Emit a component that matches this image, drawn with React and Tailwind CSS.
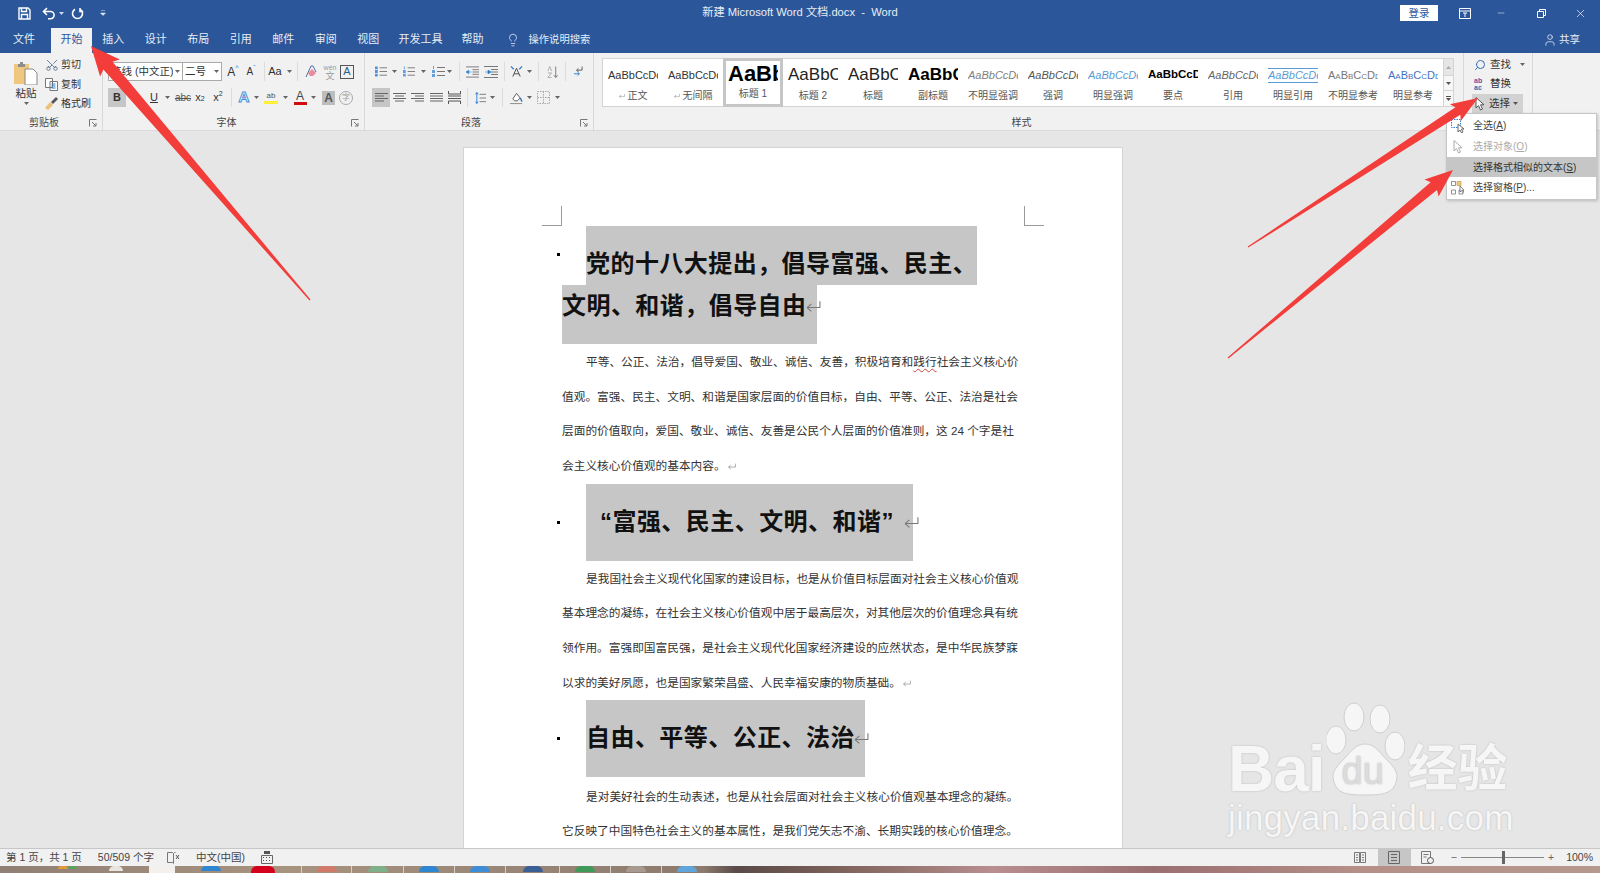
import React from "react";
import { Lightbulb, Scissors, Search, User, X, Minus } from "lucide-react";

const TABS = [
    ["文件", "w-[48px] ml-0"],
    ["开始", "w-[41px] ml-[3px] bg-[#f1f1f1] text-[#2b579a]"],
    ["插入", "w-[42.5px]"],
    ["设计", "w-[42.5px]"],
    ["布局", "w-[42.5px]"],
    ["引用", "w-[42.5px]"],
    ["邮件", "w-[42.5px]"],
    ["审阅", "w-[42.5px]"],
    ["视图", "w-[42.5px]"],
    ["开发工具", "w-[62px]"],
    ["帮助", "w-[42px]"],
];

const STYLES = [
    ["AaBbCcDd", "正文", "text-[11px] text-[#333]", true],
    ["AaBbCcDd", "无间隔", "text-[11px] text-[#333]", true],
    ["AaBb", "标题 1", "text-[22px] font-bold text-black", false, true],
    ["AaBbC", "标题 2", "text-[17px] text-[#222]"],
    ["AaBbC", "标题", "text-[17px] text-[#222]"],
    ["AaBbC", "副标题", "text-[17px] font-bold text-black"],
    ["AaBbCcDd", "不明显强调", "text-[11px] italic text-[#808080]"],
    ["AaBbCcDd", "强调", "text-[11px] italic text-[#555]"],
    ["AaBbCcDd", "明显强调", "text-[11px] italic text-[#5b9bd5]"],
    ["AaBbCcDd", "要点", "text-[11.5px] font-bold text-black"],
    ["AaBbCcDd", "引用", "text-[11px] italic text-[#666]"],
    ["AaBbCcDd", "明显引用", "text-[11px] italic text-[#5b9bd5] border-y border-[#5b9bd5] leading-[13px]"],
    ["AaBbCcDd", "不明显参考", "text-[11px] [font-variant:small-caps] text-[#777]"],
    ["AaBbCcDd", "明显参考", "text-[11px] [font-variant:small-caps] text-[#4472c4]"],
];

function Dd({ className = "w-[8px]" }) {
    return (
        <div className={`flex justify-center ${className}`}>
            <svg width="5" height="3" viewBox="0 0 5 3">
                <path d="M0 0h5L2.5 3z" fill="#666" />
            </svg>
        </div>
    );
}

function Slot({ className, children }) {
    return <div className={`flex items-center justify-center h-[19px] shrink-0 ${className}`}>{children}</div>;
}

function Sep({ className }) {
    return <div className={`w-px h-[19px] bg-[#dcdcdc] shrink-0 ${className}`}></div>;
}

function Launcher() {
    return (
        <svg className="absolute right-[5px] bottom-[3px]" width="8" height="8" viewBox="0 0 8 8" fill="none" stroke="#777">
            <path d="M.5 7.5v-7h7M3 3l4 4M7 4v3H4" />
        </svg>
    );
}

function Group({ className, label, launcher, labelClass = "", children }) {
    return (
        <div className={`relative flex flex-col h-full shrink-0 ${className}`}>
            <div className="flex-1">{children}</div>
            <div className={`h-[16px] text-center text-[10px] leading-[17px] text-[#444] ${labelClass}`}>{label}</div>
            {launcher && <Launcher />}
        </div>
    );
}

function Lines({ dots, nums }) {
    return (
        <svg width="13" height="13" viewBox="0 0 13 13">
            <path d="M5 2.5h8M5 6.5h8M5 10.5h8" stroke="#777" />
            {dots && <path d="M0 1h3v3H0zM0 5h3v3H0zM0 9h3v3H0z" fill="#2b7cd3" opacity=".8" />}
            {nums && <path d="M1 1h1v3H1zM0 5h3v3H0zM0 9h3v3H0z" fill="#2b7cd3" opacity=".7" />}
        </svg>
    );
}

function AlignIcon({ d }) {
    return (
        <svg width="13" height="11" viewBox="0 0 13 11" fill="none" stroke="#666">
            <path d={d} />
        </svg>
    );
}

function Indent({ flip }) {
    return (
        <svg width="14" height="12" viewBox="0 0 14 12">
            <path d="M0 .5h14M7 3.5h7M7 6h7M7 8.5h7M0 11.5h14" stroke="#777" fill="none" />
            <path d={flip ? "M1 6h3V4l3 2-3 2V6" : "M6 6H3V4L0 6l3 2V6"} fill="#2b7cd3" stroke="#2b7cd3" strokeWidth=".6" />
        </svg>
    );
}

function Return({ className = "", w = 14, h = 12 }) {
    return (
        <svg className={`inline-block shrink-0 ${className}`} width={w} height={h} viewBox="0 0 14 12" fill="none" stroke="#777">
            <path d="M13 1v6H1M1 7l4-3.5M1 7l4 3.5" />
        </svg>
    );
}

function Cursor({ color = "#555", fill = "#fff", size = 11 }) {
    return (
        <svg width={size} height={size + 3} viewBox="0 0 11 14">
            <path d="M1 .5v10.5l2.5-2.4 2 4.4 2-1-2-4.2H9z" fill={fill} stroke={color} />
        </svg>
    );
}

function Arrow({ from, to, len, head, shaft }) {
    const dx = to[0] - from[0];
    const dy = to[1] - from[1];
    const l = Math.hypot(dx, dy);
    const ux = dx / l;
    const uy = dy / l;
    const pt = (along, side) => {
        const x = to[0] - ux * along - uy * side;
        const y = to[1] - uy * along + ux * side;
        return `${x.toFixed(1)},${y.toFixed(1)}`;
    };
    const points = [
        pt(0, 0),
        pt(len + 3, head / 2),
        pt(len, shaft / 2),
        pt(l, 0.6),
        pt(l, -0.6),
        pt(len, -shaft / 2),
        pt(len + 3, -head / 2),
    ].join(" ");
    return <polygon points={points} fill="#f33d3a" />;
}

function TitleBar() {
    return (
        <div className="flex items-center h-[26px] text-white">
            <div className="flex flex-1 items-center">
                <svg className="ml-[18px]" width="13" height="13" viewBox="0 0 13 13" fill="none" stroke="#fff" strokeWidth="1.4">
                    <path d="M1 1h9l2 2v9H1zM3.5 1v3.5h5V1M3.5 12V7.5h6V12" />
                </svg>
                <svg className="ml-[11px]" width="15" height="13" viewBox="0 0 15 13" fill="none" stroke="#fff" strokeWidth="1.6">
                    <path d="M5 1L1.5 4.5 5 8M2 4.5h6.5a3.6 3.6 0 010 7.2H6" />
                </svg>
                <svg className="ml-[2px]" width="5" height="3" viewBox="0 0 5 3">
                    <path d="M0 0h5L2.5 3z" fill="#cfd9ea" />
                </svg>
                <svg className="ml-[7px]" width="13" height="13" viewBox="0 0 13 13" fill="none" stroke="#fff" strokeWidth="1.6">
                    <path d="M4 2.2a5 5 0 105 0M9 1v3.5h3.2" />
                </svg>
                <svg className="ml-[16px]" width="6" height="6" viewBox="0 0 6 6">
                    <path d="M1 .5h4M.5 3h5L3 5.5z" fill="#dfe6f1" stroke="#dfe6f1" strokeWidth=".5" />
                </svg>
            </div>
            <div className="text-[11.2px] text-[#e8edf5] whitespace-pre pb-px">新建 Microsoft Word 文档.docx  -  Word</div>
            <div className="flex flex-1 items-center justify-end">
                <div className="w-[38px] h-[16px] bg-white text-[#2b579a] text-[10.5px] leading-[16px] text-center">登录</div>
                <svg className="ml-[21px]" width="12" height="11" viewBox="0 0 12 11" fill="none" stroke="#fff">
                    <path d="M.5.5h11v10H.5zM.5 3h11M6 5v4M4 5h4" />
                </svg>
                <Minus className="ml-[25px] mr-[2px]" size={10} strokeWidth={1.2} />
                <svg className="ml-[29px]" width="9" height="9" viewBox="0 0 9 9" fill="none" stroke="#fff">
                    <path d="M.5 2.5h6v6h-6zM2.5 2.5v-2h6v6h-2" />
                </svg>
                <X className="ml-[28px] mr-[13px]" size={13} strokeWidth={1.2} />
            </div>
        </div>
    );
}

function TabBar() {
    return (
        <div className="flex items-end h-[27px] text-[11px] text-[#e8edf5]">
            {TABS.map(([name, cls]) => (
                <div key={name} className={`h-[25px] leading-[23px] text-center shrink-0 ${cls}`}>
                    {name}
                </div>
            ))}
            <div className="flex items-center h-[25px] ml-[12px] pb-[2px]">
                <Lightbulb size={14} strokeWidth={1.3} />
                <span className="ml-[9px] text-[10.3px]">操作说明搜索</span>
            </div>
            <div className="flex items-center h-[25px] ml-auto mr-[20px] pb-[2px]">
                <User size={14} strokeWidth={1.3} />
                <span className="ml-[2px] text-[10.5px]">共享</span>
            </div>
        </div>
    );
}

function ClipboardGroup() {
    return (
        <Group className="w-[103px] border-r border-[#d8d8d8]" label="剪贴板" labelClass="pr-[14px]" launcher>
            <div className="flex">
                <div className="w-[45px] pl-[14px] pt-[8px] flex flex-col">
                    <svg width="24" height="24" viewBox="0 0 24 24">
                        <rect x="0" y="3" width="15" height="20" fill="#efc77f" />
                        <path d="M4 3h2V1h3v2h2v3H4z" fill="#8d8d8d" />
                        <path d="M11 8h8l4 4v12H11z" fill="#fff" stroke="#888" />
                    </svg>
                    <div className="w-[24px] mt-px text-[10.5px] leading-[14px] text-center text-[#333] whitespace-nowrap">粘贴</div>
                    <div className="w-[24px] mt-[2px] flex justify-center">
                        <svg width="5" height="3" viewBox="0 0 5 3"><path d="M0 0h5L2.5 3z" fill="#666" /></svg>
                    </div>
                </div>
                <div className="pt-[2px] text-[10px] text-[#333]">
                    <div className="flex items-center h-[19px]">
                        <Scissors size={14} strokeWidth={1.5} className="text-[#55708c] -rotate-90" />
                        <span className="ml-[2px]">剪切</span>
                    </div>
                    <div className="flex items-center h-[20px]">
                        <svg width="13" height="13" viewBox="0 0 13 13" fill="#fff" stroke="#777">
                            <path d="M.5.5h7v9h-7zM5 3.5h7.5v9H5z" />
                            <path d="M6.5 6h4M6.5 8h4M6.5 10h4" stroke="#2b7cd3" />
                        </svg>
                        <span className="ml-[3px]">复制</span>
                    </div>
                    <div className="flex items-center h-[19px]">
                        <svg width="13" height="13" viewBox="0 0 13 13">
                            <path d="M0 11l5-6 3 3-5 5z" fill="#e9c17a" />
                            <path d="M6 5l5-5 2 2-5 5z" fill="#555" />
                        </svg>
                        <span className="ml-[3px]">格式刷</span>
                    </div>
                </div>
            </div>
        </Group>
    );
}

function FontGroup() {
    return (
        <Group className="w-[262px] border-r border-[#d8d8d8]" label="字体" labelClass="pr-[14px]" launcher>
            <div className="pt-[9px] pl-[5px]">
                <div className="flex items-center text-[#333]">
                    <Slot className="w-[75px] bg-white border border-[#aaa] justify-between! px-[2px]">
                        <span className="text-[10.5px] whitespace-nowrap overflow-hidden">等线 (中文正)</span>
                        <svg className="shrink-0" width="5" height="3" viewBox="0 0 5 3"><path d="M0 0h5L2.5 3z" fill="#666" /></svg>
                    </Slot>
                    <Slot className="w-[39px] bg-white border border-l-0 border-[#aaa] justify-between! px-[2px]">
                        <span className="text-[10.5px] whitespace-nowrap">二号</span>
                        <svg className="shrink-0" width="5" height="3" viewBox="0 0 5 3"><path d="M0 0h5L2.5 3z" fill="#666" /></svg>
                    </Slot>
                    <Slot className="w-[18px] ml-[2px] text-[12px]">A<sup className="text-[#2b7cd3] text-[7px]">^</sup></Slot>
                    <Slot className="w-[18px] text-[10px]">A<sup className="text-[#2b7cd3] text-[7px]">ˇ</sup></Slot>
                    <Sep className="ml-[4px]" />
                    <Slot className="w-[14px] ml-[3px] text-[11px]">Aa</Slot>
                    <Dd className="w-[8px] ml-[3px]" />
                    <Sep className="ml-[4px]" />
                    <Slot className="w-[18px] ml-[4px]">
                        <svg width="13" height="13" viewBox="0 0 13 13">
                            <path d="M1 12L6 1h2l3 6" fill="none" stroke="#4b6da3" />
                            <path d="M3 8l4-4 4 4-3 3H5z" fill="#e88aa0" />
                        </svg>
                    </Slot>
                    <Slot className="w-[18px] ml-px text-[7px] leading-[8px] text-[#999] flex-col">
                        <span className="text-[7px]">wén</span>
                        <span className="text-[9px]">文</span>
                    </Slot>
                    <Slot className="w-[14px] h-[14px]! ml-px border border-[#555] text-[11px] text-[#2d5f93]">A</Slot>
                </div>
                <div className="flex items-center mt-[7px] text-[#333]">
                    <Slot className="w-[18px] bg-[#c6c6c6] text-[11px] font-bold">B</Slot>
                    <Slot className="w-[19px] text-[11px] italic font-['Liberation_Serif']">I</Slot>
                    <Slot className="w-[18px] text-[11px] underline">U</Slot>
                    <Dd />
                    <Slot className="w-[24px] text-[10px] line-through text-[#555]">abc</Slot>
                    <Slot className="w-[10px] text-[11px]">x<sub className="text-[7px]">2</sub></Slot>
                    <Slot className="w-[26px] text-[11px]">x<sup className="text-[7px]">2</sup></Slot>
                    <Sep />
                    <Slot className="w-[16px] ml-[4px] text-[15px] text-white font-bold [-webkit-text-stroke:1px_#4a8fd8]">A</Slot>
                    <Dd />
                    <Slot className="w-[16px] ml-[3px] flex-col">
                        <span className="text-[8px] leading-[10px] text-[#555]">ab</span>
                        <span className="w-[14px] h-[3px] bg-[#ffef3a]"></span>
                    </Slot>
                    <Dd className="w-[8px] ml-[2px]" />
                    <Slot className="w-[16px] ml-[3px] flex-col">
                        <span className="text-[12px] leading-[12px] text-[#444]">A</span>
                        <span className="w-[13px] h-[3px] bg-[#d00d0d]"></span>
                    </Slot>
                    <Dd className="w-[8px] ml-px" />
                    <Slot className="w-[13px] h-[14px]! ml-[5px] mr-px bg-[#bdbdbd] text-[12px] font-bold text-[#555]">A</Slot>
                    <Slot className="w-[14px] h-[14px]! ml-[3px] rounded-full border border-[#aaa] text-[8px] text-[#999]">字</Slot>
                </div>
            </div>
        </Group>
    );
}

function ParagraphGroup() {
    return (
        <Group className="w-[229px] border-r border-[#d8d8d8]" label="段落" labelClass="pr-[16px]" launcher>
            <div className="pt-[9px]">
                <div className="flex items-center">
                    <Slot className="w-[12px] ml-[10px]"><Lines dots /></Slot>
                    <Dd className="w-[8px] ml-[3px]" />
                    <Slot className="w-[12px] ml-[5px]"><Lines nums /></Slot>
                    <Dd className="w-[8px] ml-[4px]" />
                    <Slot className="w-[13px] ml-[5px]"><Lines nums /></Slot>
                    <Dd />
                    <Sep className="ml-[6px]" />
                    <Slot className="w-[13px] ml-[6px]"><Indent /></Slot>
                    <Slot className="w-[14px] ml-[5px]"><Indent flip /></Slot>
                    <Sep className="ml-[6px]" />
                    <Slot className="w-[13px] ml-[5px]">
                        <svg width="14" height="13" viewBox="0 0 14 13" fill="none">
                            <path d="M3 12L7 3l4 9M4.5 9h5" stroke="#444" />
                            <path d="M1 1l3 3M13 1l-3 3" stroke="#2b7cd3" strokeWidth="1.4" />
                        </svg>
                    </Slot>
                    <Dd className="w-[8px] ml-[2px]" />
                    <Sep className="ml-[5px]" />
                    <Slot className="w-[11px] ml-[8px]">
                        <svg width="12" height="14" viewBox="0 0 12 14" fill="none" stroke="#aaa">
                            <path d="M1 6l2-5 2 5M1 8h4l-4 5h4" />
                            <path d="M9.5 1v12M7.5 10.5l2 2.5 2-2.5" stroke="#777" />
                        </svg>
                    </Slot>
                    <Sep className="ml-[7px]" />
                    <Slot className="w-[10px] ml-[7px]">
                        <svg width="11" height="13" viewBox="0 0 11 13" fill="none" stroke="#555">
                            <path d="M10 1v4H4M4 5l2-2M4 5l2 2" />
                            <path d="M1 9h6M7 9L5 7M7 9l-2 2" stroke="#2b7cd3" />
                        </svg>
                    </Slot>
                </div>
                <div className="flex items-center mt-[7px]">
                    <Slot className="w-[18px] ml-[7px] bg-[#c6c6c6]"><AlignIcon d="M0 1.5h13M0 4h9M0 6.5h13M0 9h9" /></Slot>
                    <Slot className="w-[18px]"><AlignIcon d="M0 1.5h13M2 4h9M0 6.5h13M2 9h9" /></Slot>
                    <Slot className="w-[18px]"><AlignIcon d="M0 1.5h13M4 4h9M0 6.5h13M4 9h9" /></Slot>
                    <Slot className="w-[18px] ml-px"><AlignIcon d="M0 1.5h13M0 4h13M0 6.5h13M0 9h13" /></Slot>
                    <Slot className="w-[18px]">
                        <svg width="13" height="13" viewBox="0 0 13 13" fill="none" stroke="#555">
                            <path d="M.5 0v3h12V0M0 5h13M0 7.5h13M.5 13v-3h12v3" />
                        </svg>
                    </Slot>
                    <Sep className="ml-[4px]" />
                    <Slot className="w-[11px] ml-[7px]">
                        <svg width="12" height="14" viewBox="0 0 12 14" fill="none">
                            <path d="M5 3h7M5 7h7M5 11h7" stroke="#777" />
                            <path d="M2 1v12M.5 3L2 1l1.5 2M.5 11L2 13l1.5-2" stroke="#2b7cd3" />
                        </svg>
                    </Slot>
                    <Dd className="w-[8px] ml-[2px]" />
                    <Sep className="ml-[6px]" />
                    <Slot className="w-[13px] ml-[7px]">
                        <svg width="14" height="14" viewBox="0 0 14 14" fill="none">
                            <path d="M3 8l4-6 4 5-3 3H5z" stroke="#555" fill="#fff" />
                            <path d="M11 7c1 2 2 3 1.5 4" stroke="#2f6fb3" strokeWidth="1.5" />
                            <path d="M0 13h13" stroke="#888" />
                        </svg>
                    </Slot>
                    <Dd className="w-[8px] ml-[2px]" />
                    <Slot className="w-[13px] ml-[4px]">
                        <svg width="13" height="13" viewBox="0 0 13 13" fill="none" stroke="#aaa" strokeDasharray="1.5 1">
                            <path d="M.5.5h12v12H.5zM.5 6.5h12M6.5.5v12" />
                        </svg>
                    </Slot>
                    <Dd className="w-[8px] ml-[3px]" />
                </div>
            </div>
        </Group>
    );
}

function StylesGroup() {
    return (
        <Group className="w-[870px] border-r border-[#d8d8d8]" label="样式" labelClass="pr-[14px]">
            <div className="flex ml-[8px] mt-[5px] h-[49px]">
                <div className="flex bg-white border border-[#d4d4d4]">
                    {STYLES.map(([preview, label, cls, mark, selected]) => (
                        <div
                            key={label}
                            className={`flex flex-col items-center w-[60px] shrink-0 ${selected ? "border-[3px] border-[#c6c6c6] -my-px" : "pt-[3px]"}`}
                        >
                            <div className={`flex items-center w-[50px] h-[26px] overflow-hidden whitespace-nowrap ${selected ? "-mt-[1px]" : ""}`}>
                                <span className={cls}>{preview}</span>
                            </div>
                            <div className="flex items-center mt-[1px] text-[10px] leading-[14px] text-[#555] whitespace-nowrap">
                                {mark && <Return className="mr-[3px]" w={6} h={6} />}
                                {label}
                            </div>
                        </div>
                    ))}
                </div>
                <div className="flex flex-col w-[10px] border border-l-0 border-[#d4d4d4] bg-[#f7f7f7]">
                    <div className="flex items-center justify-center h-[16px] bg-[#e6e6e6]">
                        <svg width="5" height="3" viewBox="0 0 5 3"><path d="M2.5 0L5 3H0z" fill="#aaa" /></svg>
                    </div>
                    <div className="flex items-center justify-center h-[16px] border-y border-[#d4d4d4]">
                        <svg width="5" height="3" viewBox="0 0 5 3"><path d="M0 0h5L2.5 3z" fill="#555" /></svg>
                    </div>
                    <div className="flex flex-col items-center justify-center flex-1">
                        <div className="w-[5px] h-px bg-[#555] mb-px"></div>
                        <svg width="5" height="3" viewBox="0 0 5 3"><path d="M0 0h5L2.5 3z" fill="#555" /></svg>
                    </div>
                </div>
            </div>
        </Group>
    );
}

function EditingGroup() {
    return (
        <Group className="w-[69px] border-r border-[#d8d8d8]" label="">
            <div className="pt-[1px] pl-[8px] text-[10.5px] text-[#333]">
                <div className="flex items-center h-[19px] pl-[2px] mt-[1px]">
                    <Search size={12} strokeWidth={2} className="text-[#2f6fb3] -scale-x-100" />
                    <span className="ml-[4px]">查找</span>
                    <svg className="ml-[9px]" width="5" height="3" viewBox="0 0 5 3"><path d="M0 0h5L2.5 3z" fill="#666" /></svg>
                </div>
                <div className="flex items-center h-[20px] pl-[2px]">
                    <div className="flex flex-col w-[12px] text-[7px] leading-[7px] font-bold">
                        <span className="text-[#7a4c9f]">ab</span>
                        <span className="text-[#2f6fb3]">ac</span>
                    </div>
                    <span className="ml-[4px]">替换</span>
                </div>
                <div className="flex items-center w-[51px] h-[19px] bg-[#d2d2d2] pl-[3px]">
                    <Cursor />
                    <span className="ml-[3px]">选择</span>
                    <svg className="ml-[3px]" width="5" height="3" viewBox="0 0 5 3"><path d="M0 0h5L2.5 3z" fill="#555" /></svg>
                </div>
            </div>
        </Group>
    );
}

function SelectMenu() {
    return (
        <div className="absolute left-[1446px] top-[113px] w-[151px] h-[87px] bg-white border border-[#c6c6c6] shadow-[1px_1px_3px_rgba(0,0,0,0.2)] pt-[1px] text-[10px] text-[#444]">
            <div className="flex items-center h-[21px]">
                <div className="w-[26px] pl-[4px]">
                    <svg width="14" height="14" viewBox="0 0 14 14" fill="none">
                        <path d="M.5.5h9v8h-9z" stroke="#2b7cd3" strokeDasharray="1.5 1" />
                        <path d="M7 5v8l2-2 1.5 3 1.5-1-1.5-3H13z" fill="#fff" stroke="#666" />
                    </svg>
                </div>
                <span>全选(<span className="underline">A</span>)</span>
            </div>
            <div className="flex items-center h-[21px] text-[#aaa]">
                <div className="w-[26px] pl-[6px]">
                    <Cursor color="#aaa" />
                </div>
                <span>选择对象(<span className="underline">O</span>)</span>
            </div>
            <div className="flex items-center h-[20px] bg-[#c6c6c6] text-[#333]">
                <span className="ml-[26px]">选择格式相似的文本(<span className="underline">S</span>)</span>
            </div>
            <div className="flex items-center h-[21px]">
                <div className="w-[26px] pl-[4px]">
                    <svg width="14" height="14" viewBox="0 0 14 14" fill="none" stroke="#777" strokeWidth=".8">
                        <path d="M.5.5h4v4h-4zM.5 9h4v4h-4zM8 9h4v4H8z" />
                        <path d="M6 .5h4v4H6z" fill="#efc77f" stroke="#c9a25a" />
                        <path d="M9 5v6l1.5-1.5 1 2 1-.5-1-2H13z" fill="#fff" stroke="#666" />
                    </svg>
                </div>
                <span>选择窗格(<span className="underline">P</span>)...</span>
            </div>
        </div>
    );
}

function Heading({ children, className }) {
    return <div className={`text-[24px] font-bold tracking-[0.45px] text-[#111] whitespace-nowrap ${className}`}>{children}</div>;
}

function Bullet({ className }) {
    return <div className={`absolute left-[-5px] w-[3px] h-[3px] bg-black ${className}`}></div>;
}

function Body({ indent, children }) {
    return (
        <div className={`h-[34.7px] leading-[34.7px] text-[11.7px] text-[#333] whitespace-nowrap ${indent ? "pl-[24px]" : ""}`}>
            {children}
        </div>
    );
}

function Page() {
    return (
        <div className="w-[660px] min-h-[760px] bg-white border border-[#d4d4d4] pt-[58px]">
            <div className="flex justify-between mx-[78px]">
                <div className="w-[20px] h-[20px] border-r border-b border-[#9a9a9a]"></div>
                <div className="w-[20px] h-[20px] border-l border-b border-[#9a9a9a]"></div>
            </div>
            <div className="relative ml-[98px] w-[460px]">
                <Bullet className="top-[27px]" />
                <Heading className="flex items-center w-[391px] h-[59px] ml-[24px] pt-[17px] bg-[#c6c6c6]">党的十八大提出，倡导富强、民主、</Heading>
                <Heading className="flex items-center w-[255px] h-[59px] pb-[17px] bg-[#c6c6c6]">
                    文明、和谐，倡导自由<Return className="-ml-[1px]" w={15} h={13} />
                </Heading>
                <div className="mt-px">
                    <Body indent>平等、公正、法治，倡导爱国、敬业、诚信、友善，积极培育和<span className="underline decoration-wavy decoration-[#d04040] decoration-1 underline-offset-2">践行</span>社会主义核心价</Body>
                    <Body>值观。富强、民主、文明、和谐是国家层面的价值目标，自由、平等、公正、法治是社会</Body>
                    <Body>层面的价值取向，爱国、敬业、诚信、友善是公民个人层面的价值准则，这 24 个字是社</Body>
                    <Body><span className="inline-flex items-center">会主义核心价值观的基本内容。<Return className="ml-[2px]" w={8} h={7} /></span></Body>
                </div>
                <div className="relative">
                    <Bullet className="top-[37px]" />
                    <Heading className="flex items-center w-[327px] h-[77px] ml-[24px] pl-[14px] bg-[#c6c6c6]">
                        “富强、民主、文明、和谐”<Return className="ml-[10px]" w={15} h={13} />
                    </Heading>
                </div>
                <div className="mt-px">
                    <Body indent>是我国社会主义现代化国家的建设目标，也是从价值目标层面对社会主义核心价值观</Body>
                    <Body>基本理念的凝练，在社会主义核心价值观中居于最高层次，对其他层次的价值理念具有统</Body>
                    <Body>领作用。富强即国富民强，是社会主义现代化国家经济建设的应然状态，是中华民族梦寐</Body>
                    <Body><span className="inline-flex items-center">以求的美好夙愿，也是国家繁荣昌盛、人民幸福安康的物质基础。<Return className="ml-[2px]" w={8} h={7} /></span></Body>
                </div>
                <div className="relative -mt-px">
                    <Bullet className="top-[37px]" />
                    <Heading className="flex items-center w-[279px] h-[77px] ml-[24px] bg-[#c6c6c6]">
                        自由、平等、公正、法治<Return className="-ml-[1px] mr-[-10px]" w={15} h={13} />
                    </Heading>
                </div>
                <div className="mt-[3px]">
                    <Body indent>是对美好社会的生动表述，也是从社会层面对社会主义核心价值观基本理念的凝练。</Body>
                    <Body>它反映了中国特色社会主义的基本属性，是我们党矢志不渝、长期实践的核心价值理念。</Body>
                </div>
            </div>
        </div>
    );
}

function StatusBar() {
    return (
        <div className="flex items-center h-[18px] bg-[#f1f1f1] border-t border-[#c6c6c6] text-[10.5px] text-[#444] shrink-0">
            <span className="ml-[6px] whitespace-pre">第 1 页，共 1 页</span>
            <span className="ml-[16px]">50/509 个字</span>
            <svg className="ml-[13px]" width="13" height="12" viewBox="0 0 13 12" fill="none" stroke="#777">
                <path d="M.5.5h5l1 1v10l-1-1h-5zM6.5 1.5l1-1h1" />
                <path d="M9 3l3 4M12 3L9 7" stroke="#555" />
            </svg>
            <span className="ml-[16px]">中文(中国)</span>
            <svg className="ml-[16px]" width="12" height="13" viewBox="0 0 12 13">
                <path d="M3 0h6v3H3z" fill="#555" />
                <path d="M.5 4.5h11v8H.5z" fill="none" stroke="#666" />
                <path d="M2 6h1v1H2zM5 6h1v1H5zM8 6h1v1H8zM2 9h1v1H2zM5 9h1v1H5zM8 9h1v1H8z" fill="#555" />
            </svg>
            <div className="flex items-center h-full ml-auto">
                <svg width="12" height="13" viewBox="0 0 12 13" fill="none" stroke="#777">
                    <path d="M.5 1.5h5v10h-5zM6.5 1.5h5v10h-5zM2 4h2M2 6.5h2M2 9h2M8 4h2M8 6.5h2M8 9h2" />
                </svg>
                <div className="flex items-center justify-center w-[33px] h-full ml-[12px] bg-[#c6c6c6]">
                    <svg width="12" height="13" viewBox="0 0 12 13" fill="none" stroke="#666">
                        <path d="M.5.5h11v12H.5zM3 3.5h6M3 6.5h6M3 9.5h6" />
                    </svg>
                </div>
                <svg className="ml-[10px]" width="13" height="13" viewBox="0 0 13 13" fill="none" stroke="#777">
                    <path d="M.5.5h9v12h-9zM2.5 3.5h5M2.5 6h3" />
                    <circle cx="9.5" cy="9.5" r="3" fill="#f1f1f1" stroke="#555" />
                </svg>
                <span className="ml-[17px] text-[#666]">−</span>
                <div className="relative w-[83px] h-px ml-[4px] bg-[#888]">
                    <div className="absolute left-[41px] top-[-6px] w-[3px] h-[13px] bg-[#666]"></div>
                </div>
                <span className="ml-[4px] text-[#666]">+</span>
                <span className="ml-[12px] mr-[7px]">100%</span>
            </div>
        </div>
    );
}

function TaskBar() {
    const tiles = ["w-[50px]", "w-[52px]", "w-[51px]", "w-[51px]", "w-[54px]", "w-[51px]", "w-[51px]", "w-[51px]"];
    const tops = ["bg-[#d27a6a]", "bg-[#7fb08a]", "bg-[#2f86d0]", "bg-[#3d8ed6]", "bg-[#3a5f94]", "bg-[#3f9a5a]", "bg-[#a89a90]", "bg-[#5fa5dc]"];
    return (
        <div className="flex flex-1 bg-[linear-gradient(90deg,#8f7f74_0%,#a8937f_18%,#8c7a6e_44%,#5a4a48_46%,#7a6058_52%,#b88e8e_62%,#9a6f70_72%,#b58f88_85%,#b5988e_100%)] overflow-hidden">
            <div className="flex items-start w-[301px] shrink-0">
                <div className="w-[10px] h-[3px] ml-[58px] bg-[#e09a3a] rounded-t-full"></div>
                <div className="w-[9px] h-[3px] bg-[#5aa35a] rounded-t-full"></div>
                <div className="w-[14px] h-[5px] ml-[32px] bg-[#e9e4df] rounded-t-full"></div>
                <div className="w-[26px] h-[7px] ml-[26px] bg-[#f4f0ee]"></div>
                <div className="w-[20px] h-[5px] ml-[26px] bg-[#2f86d0] rounded-t-full"></div>
                <div className="w-[24px] h-[7px] ml-[30px] bg-[#d5001c] rounded-t-md"></div>
            </div>
            {tiles.map((w, i) => (
                <div key={i} className={`flex justify-center border-l border-[#d8cfc8] shrink-0 ${w}`}>
                    <div className={`w-[20px] h-[6px] rounded-t-full ${tops[i]}`}></div>
                </div>
            ))}
        </div>
    );
}

function Watermark() {
    return (
        <div className="absolute left-[1228px] top-[700px] w-[300px] [font-family:'Liberation_Sans','Noto_Sans_CJK_SC',sans-serif] text-[#f6f6f6] [text-shadow:0_0_2px_#b4b4b4]">
            <div className="flex items-end h-[98px]">
                <span className="text-[64px] leading-[58px] font-bold tracking-[-1px]">Bai</span>
                <div className="relative w-[78px] h-[98px] ml-[2px] shrink-0">
                    <svg width="78" height="98" viewBox="0 0 78 98" fill="#f6f6f6" stroke="#cfcfcf">
                        <ellipse cx="27" cy="17" rx="10" ry="14" />
                        <ellipse cx="53" cy="19" rx="10" ry="14" />
                        <ellipse cx="9" cy="40" rx="10" ry="14" />
                        <ellipse cx="68" cy="46" rx="10" ry="14" />
                        <path d="M38 44c10 0 14 8 22 16 8 8 13 14 8 25-4 9-14 10-30 10s-26-1-30-10c-5-11 0-17 8-25 8-8 12-16 22-16z" />
                    </svg>
                    <span className="absolute left-[15px] top-[52px] text-[38px] leading-[38px] text-[#dcdcdc]">du</span>
                </div>
                <span className="ml-[3px] text-[50px] leading-[58px] font-bold whitespace-nowrap">经验</span>
            </div>
            <div className="-mt-[2px] text-[35px] leading-[44px] tracking-[0.2px] whitespace-nowrap">jingyan.baidu.com</div>
        </div>
    );
}

export default function App() {
    return (
        <div className="relative flex flex-col w-[1600px] h-[873px] overflow-hidden bg-[#e6e6e6] [font-family:'Liberation_Sans','Noto_Sans_CJK_SC',sans-serif]">
            <div className="bg-[#2b579a] shrink-0">
                <TitleBar />
                <TabBar />
            </div>
            <div className="flex h-[78px] bg-[#f1f1f1] border-b border-[#dadada] shrink-0">
                <ClipboardGroup />
                <FontGroup />
                <ParagraphGroup />
                <StylesGroup />
                <EditingGroup />
            </div>
            <div className="flex-1 min-h-0 overflow-hidden pl-[463px] pt-[16px]">
                <Page />
            </div>
            <StatusBar />
            <div className="flex h-[7px] shrink-0">
                <TaskBar />
            </div>
            <Watermark />
            <SelectMenu />
            <svg className="absolute left-0 top-0 pointer-events-none" width="1600" height="873">
                <Arrow from={[310, 300]} to={[91, 46]} len={26} head={26} shaft={12} />
                <Arrow from={[1248, 247]} to={[1478, 98]} len={24} head={20} shaft={9} />
                <Arrow from={[1228, 358]} to={[1453, 170]} len={25} head={22} shaft={10} />
            </svg>
        </div>
    );
}
